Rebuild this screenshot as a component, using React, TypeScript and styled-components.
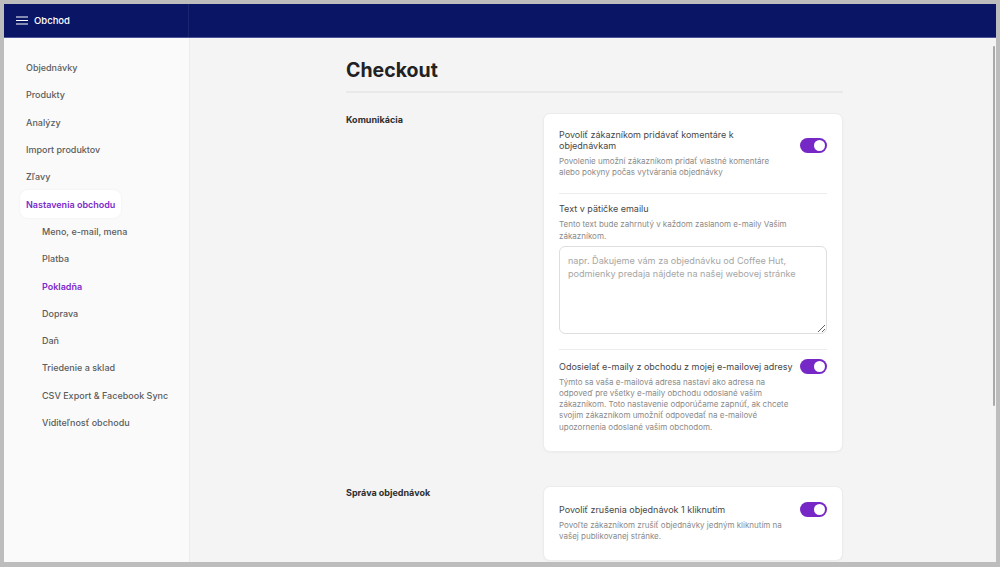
import * as React from 'react';
import styled, { createGlobalStyle } from 'styled-components';

const GlobalStyle = createGlobalStyle`
    html, body {
        margin: 0;
        padding: 0;
        height: 100%;
    }
    body {
        font-family: Inter, 'Noto Sans', 'Liberation Sans', sans-serif;
        -webkit-font-smoothing: antialiased;
    }
    #root {
        height: 100%;
    }
`;

const Frame = styled.div`
    box-sizing: border-box;
    height: 100vh;
    padding: 4px 4px 5px 4px;
    background: #bdbdbd;
`;

const Shell = styled.div`
    display: flex;
    flex-direction: column;
    height: 100%;
    overflow: hidden;
    background: #f4f4f4;
`;

const Topbar = styled.header`
    display: flex;
    flex-shrink: 0;
    height: 33px;
    background: #0b1566;
    border-bottom: 1px solid #4b5498;
`;

const Brand = styled.div`
    display: flex;
    align-items: center;
    gap: 6px;
    width: 185px;
    padding-left: 12px;
    box-sizing: border-box;
    border-right: 1px solid #1c266f;
    color: #fff;
    font-size: 9.5px;
    font-weight: 500;
`;

const Body = styled.div`
    display: flex;
    flex: 1;
    min-height: 0;
`;

const Sidebar = styled.nav`
    display: flex;
    flex-direction: column;
    width: 185px;
    flex-shrink: 0;
    padding-top: 16px;
    background: #fafafa;
    border-right: 1px solid #ececec;
`;

const NavItem = styled.a<{ $sub?: boolean; $active?: boolean; $current?: boolean }>`
    display: flex;
    align-items: center;
    width: fit-content;
    height: 27.3px;
    padding: 0 6px;
    margin-left: ${p => (p.$sub ? '32px' : '16px')};
    border-radius: 8px;
    font-size: 9px;
    font-weight: ${p => (p.$active || p.$current ? 600 : 500)};
    color: ${p => (p.$active || p.$current ? '#7a2ccb' : '#5c5c5c')};
    background: ${p => (p.$active ? '#ffffff' : 'transparent')};
    box-shadow: ${p => (p.$active ? '0 0 3px rgba(0, 0, 0, 0.05)' : 'none')};
    cursor: pointer;
`;

const Main = styled.main`
    position: relative;
    flex: 1;
    display: flex;
    justify-content: center;
    padding-left: 3px;
    overflow: hidden;
`;

const Scroll = styled.div`
    position: absolute;
    top: 8px;
    right: 1px;
    width: 2px;
    height: 360px;
    background: #a9a9a9;
    border-radius: 1px;
`;

const Content = styled.div`
    width: 497px;
    padding-top: 20px;
`;

const Heading = styled.h1`
    margin: 0 0 21px;
    padding-bottom: 9px;
    border-bottom: 2px solid #e9e9e9;
    font-size: 19.5px;
    line-height: 24px;
    font-weight: 700;
    color: #222;
`;

const Sections = styled.div`
    display: flex;
    flex-direction: column;
    gap: 36px;
`;

const Section = styled.section`
    display: grid;
    grid-template-columns: 198px 298px;
`;

const SectionLabel = styled.h2`
    margin: 0;
    font-size: 9px;
    line-height: 11px;
    font-weight: 700;
    color: #2e2e2e;
`;

const Card = styled.div`
    display: flex;
    flex-direction: column;
    padding: 15px 15px 18px;
    background: #fff;
    border-radius: 6px;
    box-shadow: 0 0 0 1px #ececec, 0 1px 3px rgba(0, 0, 0, 0.06);
`;

const Row = styled.div`
    display: flex;
    flex-direction: column;
    padding: 9px 0 15px;
    border-bottom: 1px solid #ececec;

    &:first-child {
        padding-top: 0;
    }
    &:last-child {
        padding-bottom: 0;
        border-bottom: none;
    }
`;

const RowHead = styled.div`
    display: flex;
    align-items: flex-end;
    justify-content: space-between;
`;

const Title = styled.div`
    max-width: 242px;
    font-size: 9px;
    line-height: 11px;
    color: #474747;
`;

const Desc = styled.p`
    max-width: 233px;
    margin: 5px 0 0;
    font-size: 8px;
    line-height: 11.2px;
    color: #8a8a8a;
`;

const Notes = styled.textarea`
    box-sizing: border-box;
    width: 100%;
    height: 88px;
    margin-top: 4px;
    padding: 7px 8px;
    border: 1px solid #dedede;
    border-radius: 6px;
    font-family: inherit;
    font-size: 9.1px;
    line-height: 13px;
    color: #444;
    outline: none;

    &::placeholder {
        color: #a6a6a6;
    }
`;

const Switch = styled.button<{ $on: boolean }>`
    position: relative;
    flex-shrink: 0;
    width: 27px;
    height: 15px;
    margin-bottom: -2px;
    padding: 0;
    border: none;
    border-radius: 8px;
    background: ${p => (p.$on ? '#7628c6' : '#d6d6d6')};
    cursor: pointer;

    &::after {
        content: '';
        position: absolute;
        top: 2px;
        left: ${p => (p.$on ? '14px' : '2px')};
        width: 11px;
        height: 11px;
        border-radius: 50%;
        background: #fff;
    }
`;

const MenuIcon = () => (
    <svg width="12" height="9" viewBox="0 0 12 9" fill="none">
        <path d="M0 1h12M0 4.5h12M0 8h12" stroke="#fff" strokeWidth="1.1" />
    </svg>
);

const Toggle = () => {
    const [on, setOn] = React.useState(true);
    return <Switch $on={on} onClick={() => setOn(!on)} />;
};

const Setting = (props: { title: React.ReactNode; desc: string }) => (
    <Row>
        <RowHead>
            <Title>{props.title}</Title>
            <Toggle />
        </RowHead>
        <Desc>{props.desc}</Desc>
    </Row>
);

const nav = [
    { label: 'Objednávky' },
    { label: 'Produkty' },
    { label: 'Analýzy' },
    { label: 'Import produktov' },
    { label: 'Zľavy' },
    { label: 'Nastavenia obchodu', active: true },
    { label: 'Meno, e-mail, mena', sub: true },
    { label: 'Platba', sub: true },
    { label: 'Pokladňa', sub: true, current: true },
    { label: 'Doprava', sub: true },
    { label: 'Daň', sub: true },
    { label: 'Triedenie a sklad', sub: true },
    { label: 'CSV Export & Facebook Sync', sub: true },
    { label: 'Viditeľnosť obchodu', sub: true },
];

const App = () => {
    return (
        <>
            <GlobalStyle />
            <Frame>
                <Shell>
                    <Topbar>
                        <Brand>
                            <MenuIcon />
                            Obchod
                        </Brand>
                    </Topbar>
                    <Body>
                        <Sidebar>
                            {nav.map(item => (
                                <NavItem key={item.label} $sub={item.sub} $active={item.active} $current={item.current}>
                                    {item.label}
                                </NavItem>
                            ))}
                        </Sidebar>
                        <Main>
                            <Content>
                                <Heading>Checkout</Heading>
                                <Sections>
                                    <Section>
                                        <SectionLabel>Komunikácia</SectionLabel>
                                        <Card>
                                            <Setting
                                                title={<>Povoliť zákazníkom pridávať komentáre k<br />objednávkam</>}
                                                desc="Povolenie umožní zákazníkom pridať vlastné komentáre alebo pokyny počas vytvárania objednávky"
                                            />
                                            <Row>
                                                <Title>Text v pätičke emailu</Title>
                                                <Desc>Tento text bude zahrnutý v každom zaslanom e-maily Vašim zákazníkom.</Desc>
                                                <Notes placeholder="napr. Ďakujeme vám za objednávku od Coffee Hut, podmienky predaja nájdete na našej webovej stránke" />
                                            </Row>
                                            <Setting
                                                title="Odosielať e-maily z obchodu z mojej e-mailovej adresy"
                                                desc="Týmto sa vaša e-mailová adresa nastaví ako adresa na odpoveď pre všetky e-maily obchodu odoslané vašim zákazníkom. Toto nastavenie odporúčame zapnúť, ak chcete svojim zákazníkom umožniť odpovedať na e-mailové upozornenia odoslané vašim obchodom."
                                            />
                                        </Card>
                                    </Section>
                                    <Section>
                                        <SectionLabel>Správa objednávok</SectionLabel>
                                        <Card>
                                            <Setting
                                                title="Povoliť zrušenia objednávok 1 kliknutím"
                                                desc="Povoľte zákazníkom zrušiť objednávky jedným kliknutím na vašej publikovanej stránke."
                                            />
                                        </Card>
                                    </Section>
                                </Sections>
                            </Content>
                            <Scroll />
                        </Main>
                    </Body>
                </Shell>
            </Frame>
        </>
    );
};

export default App;
